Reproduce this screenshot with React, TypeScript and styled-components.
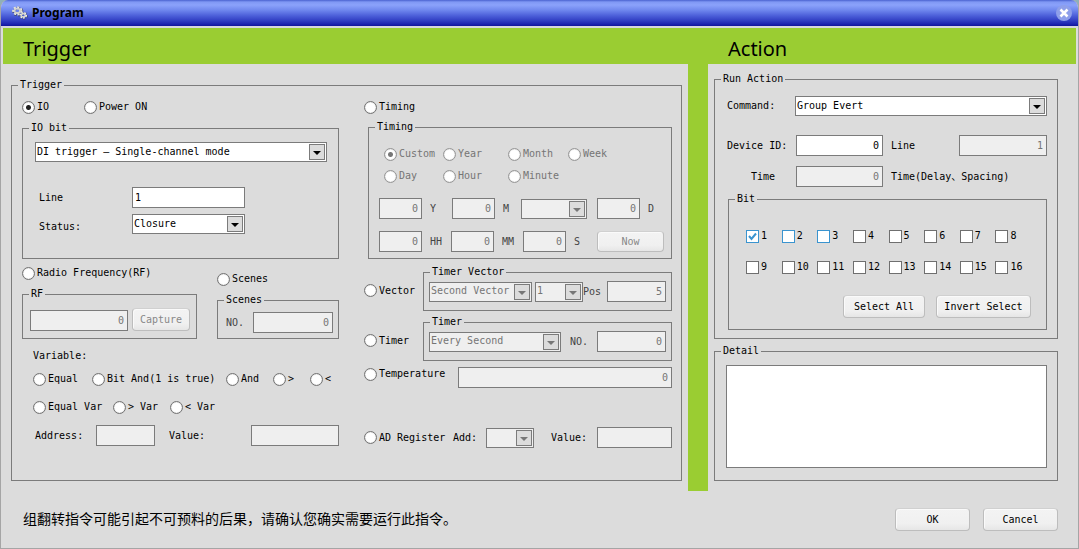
import React, { useId } from "react";
import styled, { createGlobalStyle } from "styled-components";

const line = "#7b7b7b";
const face = "#dcdcdc";
const green = "#9acd32";
const dimText = "#757575";

const GlobalStyle = createGlobalStyle`
  *, *::before, *::after { box-sizing: border-box; }
  body {
    margin: 0;
    background: #8fb0b8;
    color: #000;
    font: 10px/14px "DejaVu Sans Mono", "Noto Sans CJK SC", monospace;
  }
  button, input, select, textarea { font: inherit; color: inherit; margin: 0; }
`;

const Window = styled.div`
  display: flex;
  flex-direction: column;
  border: 1px solid #a5a5a5;
  border-top: 0;
  border-radius: 8px 8px 0 0;
  background: ${face};
  overflow: hidden;
`;

const TitleBar = styled.header`
  display: flex;
  align-items: center;
  gap: 4px;
  height: 26px;
  padding: 0 6px 0 11px;
  background: linear-gradient(#4a62d0 0, #8098f4 2px, #8ba2fb 5px, #7088ee 10px, #5064dc 15px, #3442c6 20px, #1c24b0 24px, #10149a 26px);
`;

const WindowTitle = styled.h1`
  flex: 1;
  margin: 0;
  font: bold 12px/26px "Noto Sans", sans-serif;
`;

const CloseButton = styled.button`
  display: flex;
  align-items: center;
  justify-content: center;
  width: 16px;
  height: 16px;
  padding: 0;
  border: 0;
  border-radius: 50%;
  background: #8e9fea;
`;

const Main = styled.main`
  display: grid;
  grid-template-columns: 685fr 20px 368fr;
  padding: 0 2px;
  border-top: 2px solid #d5d5e0;
`;

const Heading = styled.h2`
  margin: 0;
  height: 36px;
  padding: 0 20px;
  background: ${green};
  font: 20px/42px "Noto Sans", sans-serif;
`;

const Divider = styled.div`
  background: ${green};
`;

const Pane = styled.div<{ $pad: string }>`
  padding: ${(p) => p.$pad};
`;

const GroupBox = styled.fieldset<{ $top?: number; $left?: number }>`
  min-width: 0;
  margin: ${(p) => p.$top ?? 0}px 0 0 ${(p) => p.$left ?? 0}px;
  padding: 0;
  border: 1px solid ${line};
`;

const Caption = styled.legend`
  margin-left: 6px;
  padding: 0 2px;
  height: 12px;
  line-height: 12px;
`;

const Body = styled.div<{ $pad: string }>`
  padding: ${(p) => p.$pad};
`;

const Columns = styled.div`
  display: grid;
  grid-template-columns: 317fr 308fr;
  column-gap: 25px;
  padding: 9px 9px 32px 10px;
`;

const Row = styled.div<{ $cols: string; $top?: number; $align?: string; $gap?: number }>`
  display: grid;
  grid-template-columns: ${(p) => p.$cols};
  column-gap: ${(p) => p.$gap ?? 0}px;
  align-items: ${(p) => p.$align ?? "center"};
  margin-top: ${(p) => p.$top ?? 0}px;
`;

const BoxedRow = styled(Row)`
  > label { margin-top: 4px; }
`;

const Label = styled.label<{ $dim?: boolean; $pad?: number }>`
  padding-left: ${(p) => p.$pad ?? 0}px;
  white-space: nowrap;
  color: ${(p) => (p.$dim ? "#444" : "#000")};
`;

const Option = styled.label<{ $dim?: boolean }>`
  display: flex;
  align-items: center;
  gap: 2px;
  height: 14px;
  white-space: nowrap;
  color: ${(p) => (p.$dim ? dimText : "#000")};
`;

const RadioDot = styled.input`
  appearance: none;
  flex: none;
  width: 13px;
  height: 13px;
  border: 1px solid #727272;
  border-radius: 50%;
  background: #fff;
  box-shadow: inset 0 0 1px #999;
  &:checked {
    background: radial-gradient(circle, #222 0 2px, #fff 3px);
  }
  &:disabled { border-color: #959595; }
  &:disabled:checked {
    background: radial-gradient(circle, #777 0 2px, #fff 3px);
  }
`;

const CheckBox = styled.input<{ $blue?: boolean }>`
  appearance: none;
  width: 13px;
  height: 13px;
  border: 1px solid ${(p) => (p.$blue ? "#3a94cf" : "#6f6f6f")};
  background: #fff;
`;

const CheckFrame = styled.span`
  position: relative;
  display: flex;
  svg {
    position: absolute;
    inset: 0;
    display: none;
    pointer-events: none;
  }
  input:checked + svg { display: block; }
`;

const Field = styled.input`
  width: 100%;
  min-width: 0;
  height: 21px;
  padding: 0 3px 1px 2px;
  border: 1px solid ${line};
  border-radius: 0;
  background: #fff;
  text-align: ${(p) => (p.type === "number" ? "right" : "left")};
  appearance: textfield;
  &::-webkit-inner-spin-button { appearance: none; margin: 0; }
  &:disabled { background: #efefef; color: ${dimText}; }
`;

const DropFrame = styled.span`
  position: relative;
  display: flex;
  min-width: 0;
`;

const DropSelect = styled.select`
  appearance: none;
  width: 100%;
  height: 20px;
  padding: 0 18px 1px 1px;
  border: 1px solid ${line};
  border-radius: 0;
  background: #fff;
  &:disabled { background: #efefef; color: ${dimText}; opacity: 1; }
`;

const DropArrow = styled.span<{ $dim?: boolean }>`
  position: absolute;
  top: 2px;
  right: 2px;
  display: flex;
  align-items: center;
  justify-content: center;
  width: 16px;
  height: 16px;
  padding-top: 2px;
  border: 1px solid ${line};
  background: ${face};
  color: ${(p) => (p.$dim ? "#777" : "#000")};
  pointer-events: none;
`;

const PushButton = styled.button<{ $width?: number; $height?: number }>`
  width: ${(p) => (p.$width ? `${p.$width}px` : "100%")};
  height: ${(p) => p.$height ?? 23}px;
  padding: 0;
  border: 1px solid #bdbdbd;
  border-top-color: #d0d0d0;
  border-radius: 4px;
  background: linear-gradient(#f3f3f3, #f0f0f0 70%, #e6e6e6);
  box-shadow: inset 1px 1px 0 #fafafa;
  white-space: nowrap;
  &:disabled { color: #888; }
`;

const BitGrid = styled.div`
  display: grid;
  grid-template-columns: repeat(8, 1fr);
  row-gap: 17px;
`;

const ButtonRow = styled.div<{ $top?: number }>`
  display: flex;
  justify-content: flex-end;
  gap: 11px;
  margin-top: ${(p) => p.$top ?? 0}px;
`;

const DetailText = styled.textarea`
  display: block;
  width: 100%;
  height: 103px;
  padding: 2px;
  border: 1px solid ${line};
  border-radius: 0;
  background: #fff;
  resize: none;
`;

const Footer = styled.footer`
  display: flex;
  align-items: center;
  gap: 13px;
  height: 57px;
  padding: 0 20px 0 22px;
`;

const Warning = styled.p`
  flex: 1;
  margin: 0;
  padding-bottom: 4px;
  font: 14px/20px "Noto Sans CJK SC", sans-serif;
`;

type RadioProps = { group: string; text: string; checked?: boolean; disabled?: boolean };

function Radio({ group, text, checked, disabled }: RadioProps) {
  return (
    <Option $dim={disabled}>
      <RadioDot type="radio" name={group} defaultChecked={checked} disabled={disabled} />
      {text}
    </Option>
  );
}

type DropProps = { id?: string; value?: string; disabled?: boolean; label?: string };

function Drop({ id, value = "", disabled, label }: DropProps) {
  return (
    <DropFrame>
      <DropSelect id={id} defaultValue={value} disabled={disabled} aria-label={label}>
        <option>{value}</option>
      </DropSelect>
      <DropArrow $dim={disabled}>
        <svg width="8" height="4" viewBox="0 0 8 4" aria-hidden="true">
          <path d="M0 0h8L4 4z" fill="currentColor" />
        </svg>
      </DropArrow>
    </DropFrame>
  );
}

function UnitField({ text }: { text: string }) {
  const id = useId();
  return (
    <>
      <Field id={id} type="number" defaultValue={0} disabled />
      <Label htmlFor={id} $dim $pad={8}>{text}</Label>
    </>
  );
}

function Bit({ n }: { n: number }) {
  return (
    <Option>
      <CheckFrame>
        <CheckBox type="checkbox" defaultChecked={n === 1} $blue={n <= 3} />
        <svg width="13" height="13" viewBox="0 0 13 13" aria-hidden="true">
          <path d="M3 6l2.5 3L10 3.5" fill="none" stroke="#3a94cf" strokeWidth="2" />
        </svg>
      </CheckFrame>
      {n}
    </Option>
  );
}

function Gears() {
  return (
    <svg width="16" height="14" viewBox="0 0 16 14" aria-hidden="true">
      <g fill="none">
        <ellipse cx="5.8" cy="5.4" rx="4" ry="3.4" stroke="#3c4470" strokeWidth="3.2" strokeDasharray="2 1.4" />
        <ellipse cx="5.3" cy="4.8" rx="3.9" ry="3.3" stroke="#e4e4dc" strokeWidth="2.6" strokeDasharray="2 1.3" />
        <ellipse cx="5.3" cy="4.8" rx="2.8" ry="2.2" stroke="#d2d2cc" strokeWidth="1.8" />
        <ellipse cx="11.7" cy="9.8" rx="2.8" ry="2.4" stroke="#3c4470" strokeWidth="2.8" strokeDasharray="1.6 1" />
        <ellipse cx="11.3" cy="9.3" rx="2.7" ry="2.3" stroke="#efefe6" strokeWidth="2.2" strokeDasharray="1.5 1" />
        <ellipse cx="11.3" cy="9.3" rx="2" ry="1.6" stroke="#d8d8d0" strokeWidth="1.4" />
      </g>
    </svg>
  );
}

const RfField = styled.span`
  display: flex;
  padding-right: 4px;
`;

function IoColumn() {
  return (
    <div>
      <Row $cols="62px 1fr">
        <Radio group="trigger" text="IO" checked />
        <Radio group="trigger" text="Power ON" />
      </Row>
      <GroupBox $top={8}>
        <Caption>IO bit</Caption>
        <Body $pad="8px 11px 24px 12px">
          <Drop value="DI trigger — Single-channel mode" label="IO mode" />
          <Row $cols="97px 113px" $top={25}>
            <Label htmlFor="io-line" $pad={4}>Line</Label>
            <Field id="io-line" type="text" defaultValue="1" />
          </Row>
          <Row $cols="97px 113px" $top={6} $align="end">
            <Label htmlFor="io-status" $pad={4}>Status:</Label>
            <Drop id="io-status" value="Closure" />
          </Row>
        </Body>
      </GroupBox>
      <Row $cols="175fr 122fr" $gap={20} $top={7} $align="end">
        <div>
          <Radio group="trigger" text="Radio Frequency(RF)" />
          <GroupBox $top={8}>
            <Caption>RF</Caption>
            <Body $pad="8px 6px 7px 7px">
              <Row $cols="1fr 58px" $align="end">
                <RfField>
                  <Field type="number" defaultValue={0} disabled aria-label="RF code" />
                </RfField>
                <PushButton disabled>Capture</PushButton>
              </Row>
            </Body>
          </GroupBox>
        </div>
        <div>
          <Radio group="trigger" text="Scenes" />
          <GroupBox $top={8}>
            <Caption>Scenes</Caption>
            <Body $pad="6px 5px 5px 8px">
              <Row $cols="27px 1fr">
                <Label htmlFor="scene-no" $dim>NO.</Label>
                <Field id="scene-no" type="number" defaultValue={0} disabled />
              </Row>
            </Body>
          </GroupBox>
        </div>
      </Row>
      <Body $pad="10px 0 0 11px">
        <Label as="div">Variable:</Label>
        <Row $cols="59px 134px 47px 37px 1fr" $top={9}>
          <Radio group="trigger" text="Equal" />
          <Radio group="trigger" text="Bit And(1 is true)" />
          <Radio group="trigger" text="And" />
          <Radio group="trigger" text=">" />
          <Radio group="trigger" text="<" />
        </Row>
        <Row $cols="80px 57px 1fr" $top={14}>
          <Radio group="trigger" text="Equal Var" />
          <Radio group="trigger" text="> Var" />
          <Radio group="trigger" text="< Var" />
        </Row>
        <Row $cols="63px 59px 96px 1fr" $top={11}>
          <Label htmlFor="var-address" $pad={2}>Address:</Label>
          <Field id="var-address" type="text" disabled />
          <Label htmlFor="var-value" $pad={14}>Value:</Label>
          <Field id="var-value" type="text" disabled />
        </Row>
      </Body>
    </div>
  );
}

function TimingColumn() {
  return (
    <div>
      <Radio group="trigger" text="Timing" />
      <GroupBox $top={7} $left={4}>
        <Caption>Timing</Caption>
        <Body $pad="14px 7px 6px 10px">
          <Body $pad="0 0 0 5px">
            <Row $cols="59px 65px 60px 1fr">
              <Radio group="timing" text="Custom" checked disabled />
              <Radio group="timing" text="Year" disabled />
              <Radio group="timing" text="Month" disabled />
              <Radio group="timing" text="Week" disabled />
            </Row>
            <Row $cols="59px 65px 1fr" $top={8}>
              <Radio group="timing" text="Day" disabled />
              <Radio group="timing" text="Hour" disabled />
              <Radio group="timing" text="Minute" disabled />
            </Row>
          </Body>
          <Row $cols="43px 30px 43px 26px 1fr 10px 43px 24px" $top={15}>
            <UnitField text="Y" />
            <UnitField text="M" />
            <Drop disabled label="Month" />
            <span />
            <UnitField text="D" />
          </Row>
          <Row $cols="43px 29px 43px 29px 43px 1fr 67px" $top={12}>
            <UnitField text="HH" />
            <UnitField text="MM" />
            <UnitField text="S" />
            <PushButton disabled $height={21}>Now</PushButton>
          </Row>
        </Body>
      </GroupBox>
      <BoxedRow $cols="59px 1fr" $top={7}>
        <Radio group="trigger" text="Vector" />
        <GroupBox>
          <Caption>Timer Vector</Caption>
          <Body $pad="3px 5px 8px 5px">
            <Row $cols="103px 3px 48px 24px 1fr">
              <Drop value="Second Vector" disabled label="Vector type" />
              <span />
              <Drop value="1" disabled label="Vector number" />
              <Label htmlFor="vector-pos" $dim>Pos</Label>
              <Field id="vector-pos" type="number" defaultValue={5} disabled />
            </Row>
          </Body>
        </GroupBox>
      </BoxedRow>
      <BoxedRow $cols="59px 1fr" $top={5}>
        <Radio group="trigger" text="Timer" />
        <GroupBox>
          <Caption>Timer</Caption>
          <Body $pad="3px 5px 8px 5px">
            <Row $cols="132px 36px 1fr">
              <Drop value="Every Second" disabled label="Timer period" />
              <Label htmlFor="timer-no" $dim $pad={9}>NO.</Label>
              <Field id="timer-no" type="number" defaultValue={0} disabled />
            </Row>
          </Body>
        </GroupBox>
      </BoxedRow>
      <Row $cols="94px 1fr" $top={6} $align="start">
        <Radio group="trigger" text="Temperature" />
        <Field type="number" defaultValue={0} disabled aria-label="Temperature" />
      </Row>
      <Row $cols="89px 33px 48px 63px 1fr" $top={39}>
        <Radio group="trigger" text="AD Register" />
        <Label htmlFor="ad-add">Add:</Label>
        <Drop id="ad-add" disabled />
        <Label htmlFor="ad-value" $pad={17}>Value:</Label>
        <Field id="ad-value" type="text" disabled />
      </Row>
    </div>
  );
}

function ActionPane() {
  return (
    <Pane $pad="9px 18px 10px 6px">
      <GroupBox>
        <Caption>Run Action</Caption>
        <Body $pad="11px 10px 8px 12px">
          <Row $cols="68px 1fr">
            <Label htmlFor="command">Command:</Label>
            <Drop id="command" value="Group Evert" />
          </Row>
          <Row $cols="69px 87fr 76px 88fr" $top={19}>
            <Label htmlFor="device-id">Device ID:</Label>
            <Field id="device-id" type="number" defaultValue={0} />
            <Label htmlFor="action-line" $pad={8}>Line</Label>
            <Field id="action-line" type="number" defaultValue={1} disabled />
          </Row>
          <Row $cols="69px 87fr 76px 88fr" $top={10}>
            <Label htmlFor="action-time" $pad={24}>Time</Label>
            <Field id="action-time" type="number" defaultValue={0} disabled />
            <Label htmlFor="action-time" $pad={8}>Time(Delay、Spacing)</Label>
          </Row>
          <GroupBox $top={6} $left={1}>
            <Caption>Bit</Caption>
            <Body $pad="24px 15px 11px 17px">
              <BitGrid>
                {Array.from({ length: 16 }, (_, i) => (
                  <Bit key={i} n={i + 1} />
                ))}
              </BitGrid>
              <ButtonRow $top={21}>
                <PushButton $width={82}>Select All</PushButton>
                <PushButton $width={95}>Invert Select</PushButton>
              </ButtonRow>
            </Body>
          </GroupBox>
        </Body>
      </GroupBox>
      <GroupBox $top={6}>
        <Caption>Detail</Caption>
        <Body $pad="8px 10px 12px 11px">
          <DetailText aria-label="Detail" />
        </Body>
      </GroupBox>
    </Pane>
  );
}

export default function App() {
  return (
    <>
      <GlobalStyle />
      <Window>
        <TitleBar>
          <Gears />
          <WindowTitle>Program</WindowTitle>
          <CloseButton aria-label="Close">
            <svg width="10" height="10" viewBox="0 0 10 10" aria-hidden="true">
              <path d="M1.5 1.5l7 7M8.5 1.5l-7 7" stroke="#fff" strokeWidth="2.6" />
            </svg>
          </CloseButton>
        </TitleBar>
        <Main>
          <Heading>Trigger</Heading>
          <Divider />
          <Heading>Action</Heading>
          <Pane $pad="15px 6px 10px 8px">
            <GroupBox>
              <Caption>Trigger</Caption>
              <Columns>
                <IoColumn />
                <TimingColumn />
              </Columns>
            </GroupBox>
          </Pane>
          <Divider />
          <ActionPane />
        </Main>
        <Footer>
          <Warning>组翻转指令可能引起不可预料的后果，请确认您确实需要运行此指令。</Warning>
          <PushButton $width={75}>OK</PushButton>
          <PushButton $width={75}>Cancel</PushButton>
        </Footer>
      </Window>
    </>
  );
}
